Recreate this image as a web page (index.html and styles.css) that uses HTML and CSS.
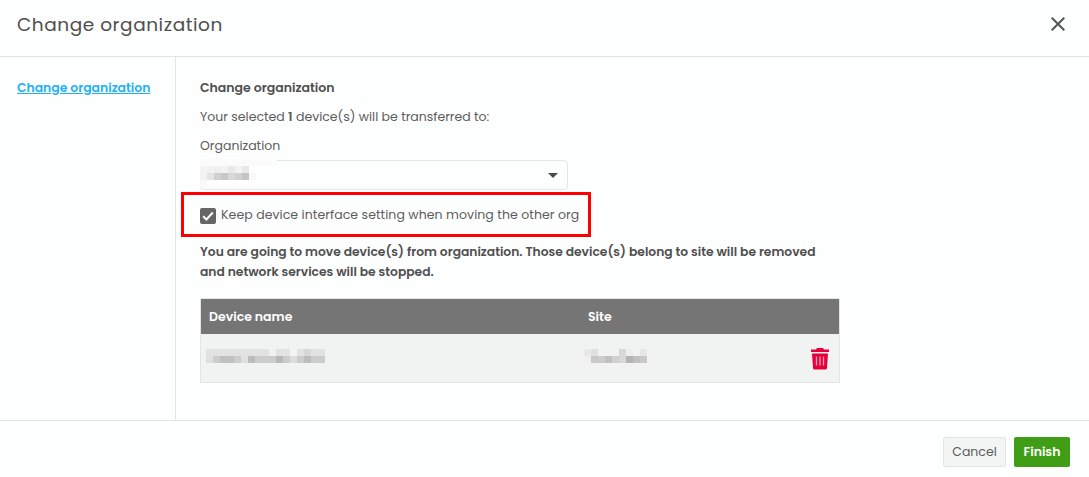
FILE: index.html
```html
<!DOCTYPE html>
<html lang="en">
<head>
  <meta charset="UTF-8" />
  <title>Change organization</title>
  <link rel="stylesheet" href="styles.css">
</head>
<body>
  <div class="modal">
    <header class="modal-header">
      <h1>Change organization</h1>
      <button class="close" aria-label="Close">
        <svg width="14" height="14" viewBox="0 0 14 14"><path d="M.7.7l12.600 12.600M13.300.7L.7 13.300" stroke="#555" stroke-width="2" fill="none"/></svg>
      </button>
    </header>

    <div class="modal-body">
      <nav class="side">
        <a href="#">Change organization</a>
      </nav>
      <main class="content">
        <h2>Change organization</h2>
        <p class="intro">Your selected <b>1</b> device(s) will be transferred to:</p>
        <label class="field-label">Organization</label>
        <div class="select">
          <svg class="blur org-blur" width="77" height="28" viewBox="0 0 77 28" shape-rendering="crispEdges">
            <rect width="77" height="7" fill="#fbfbfb"/>
            <rect y="7" width="7" height="7" fill="#f4f4f4"/>
            <rect x="7" y="7" width="7" height="7" fill="#f2f2f2"/>
            <rect x="14" y="7" width="7" height="7" fill="#efefef"/>
            <rect x="21" y="7" width="7" height="7" fill="#f2f2f2"/>
            <rect x="28" y="7" width="7" height="7" fill="#e8e8e8"/>
            <rect x="35" y="7" width="7" height="7" fill="#f2f2f2"/>
            <rect x="42" y="7" width="7" height="7" fill="#e8e8e8"/>
            <rect y="14" width="7" height="7" fill="#f2f2f2"/>
            <rect x="7" y="14" width="7" height="7" fill="#e4e4e4"/>
            <rect x="14" y="14" width="7" height="7" fill="#d0d0d0"/>
            <rect x="21" y="14" width="7" height="7" fill="#c8c8c8"/>
            <rect x="28" y="14" width="7" height="7" fill="#d8d8d8"/>
            <rect x="35" y="14" width="7" height="7" fill="#d0d0d0"/>
            <rect x="42" y="14" width="7" height="7" fill="#c4c4c4"/>
            <rect x="49" y="14" width="7" height="7" fill="#f8f8f8"/>
            <rect y="21" width="7" height="7" fill="#f8f8f8"/>
          </svg>
          <span class="caret"></span>
        </div>

        <div class="keep-box">
          <span class="check">
            <svg width="16" height="16" viewBox="0 0 16 16"><path d="M3.200 8.300l3.200 3.200 6.400-7" stroke="#fff" stroke-width="2" fill="none"/></svg>
          </span>
          <span>Keep device interface setting when moving the other org</span>
        </div>

        <p class="warning">You are going to move device(s) from organization. Those device(s) belong to site will be removed and network services will be stopped.</p>

        <div class="device-table">
          <div class="row head">
            <div class="col-name">Device name</div>
            <div class="col-site">Site</div>
          </div>
          <div class="row">
            <div class="col-name">
              <svg class="blur name-blur" width="119" height="14" viewBox="0 0 119 14" shape-rendering="crispEdges">
                <rect width="119" height="7" fill="#e2e2e2"/>
                <rect x="63" width="7" height="7" fill="#f0f0f0"/>
                <rect x="84" width="7" height="7" fill="#f4f4f4"/>
                <rect x="98" width="7" height="7" fill="#d8d8d8"/>
                <rect y="7" width="119" height="7" fill="#cccccc"/>
                <rect y="7" width="7" height="7" fill="#dfdfdf"/>
                <rect x="14" y="7" width="14" height="7" fill="#c0c0c0"/>
                <rect x="35" y="7" width="7" height="7" fill="#e0e0e0"/>
                <rect x="42" y="7" width="7" height="7" fill="#bcbcbc"/>
                <rect x="70" y="7" width="7" height="7" fill="#b8b8b8"/>
                <rect x="84" y="7" width="7" height="7" fill="#dcdcdc"/>
                <rect x="98" y="7" width="7" height="7" fill="#bcbcbc"/>
              </svg>
            </div>
            <div class="col-site">
              <svg class="blur site-blur" width="63" height="14" viewBox="0 0 63 14" shape-rendering="crispEdges">
                <rect width="7" height="7" fill="#e8e8e8"/>
                <rect x="7" width="7" height="7" fill="#e0e0e0"/>
                <rect x="35" width="7" height="7" fill="#d8d8d8"/>
                <rect x="42" width="7" height="7" fill="#eeeeee"/>
                <rect x="56" width="7" height="7" fill="#e6e6e6"/>
                <rect y="7" width="7" height="7" fill="#f0f0f0"/>
                <rect x="7" y="7" width="7" height="7" fill="#c8c8c8"/>
                <rect x="14" y="7" width="7" height="7" fill="#cccccc"/>
                <rect x="21" y="7" width="7" height="7" fill="#c0c0c0"/>
                <rect x="28" y="7" width="7" height="7" fill="#d0d0d0"/>
                <rect x="35" y="7" width="7" height="7" fill="#d8d8d8"/>
                <rect x="42" y="7" width="7" height="7" fill="#b4b4b4"/>
                <rect x="49" y="7" width="7" height="7" fill="#c0c0c0"/>
                <rect x="56" y="7" width="7" height="7" fill="#c8c8c8"/>
              </svg>
            </div>
            <button class="trash" aria-label="Delete">
              <svg width="20" height="23" viewBox="0 0 20 23"><path fill="#e4003a" d="M7 1h6l1 1.500h5v2.500h-18v-2.500h5zM2 6.500h16l-1 14.500a1.500 1.500 0 0 1-1.500 1.500h-11a1.500 1.500 0 0 1-1.500-1.500z"/><path d="M6.500 9.500v9M10 9.500v9M13.500 9.500v9" stroke="#f4a0b4" stroke-width="1.300"/></svg>
            </button>
          </div>
        </div>
      </main>
    </div>

    <footer class="modal-footer">
      <button class="btn cancel">Cancel</button>
      <button class="btn finish">Finish</button>
    </footer>
  </div>
</body>
</html>
```

FILE: styles.css
```css
* {
  box-sizing: border-box;
}

body {
  margin: 0;
  font-family: Poppins, Inter, "Open Sans", sans-serif;
  font-size: 12.5px;
  color: #5c5c5c;
  background-color: #fdfefe;
}

.modal {
  width: 1089px;
  height: 477px;
  display: flex;
  flex-direction: column;
}

.modal-header {
  height: 57px;
  padding: 0 24px 8px 17px;
  display: flex;
  align-items: center;
  justify-content: space-between;
  border-bottom: 1px solid #e3e5e5;
}

h1 {
  margin: 0;
  font-size: 18.5px;
  font-weight: 400;
  letter-spacing: 0.55px;
  color: #4f4f4f;
}

.close {
  padding: 0;
  border: none;
  background: none;
  display: flex;
}

.modal-body {
  flex: 1;
  display: flex;
}

.side {
  width: 176px;
  padding: 22px 0 0 17px;
  border-right: 1px solid #e3e5e5;
}

.side a {
  color: #1fb1f5;
  font-size: 12.4px;
  font-weight: 600;
  line-height: 16px;
}

.content {
  padding: 23px 0 0 24px;
}

h2 {
  margin: 0 0 13px;
  font-size: 12.5px;
  line-height: 16px;
  font-weight: 600;
  color: #4f4f4f;
}

.intro {
  margin: 0 0 13px;
  line-height: 16px;
}

.intro b {
  font-weight: 600;
}

.field-label {
  display: block;
  line-height: 16px;
  margin-bottom: 6px;
}

.select {
  width: 368px;
  height: 30px;
  border: 1px solid #e6e6e6;
  border-radius: 4px;
  display: flex;
  align-items: center;
  justify-content: space-between;
  padding-right: 9px;
}

.blur {
  display: block;
}

.org-blur {
  align-self: flex-start;
  margin: -2px 0 0 -1px;
}

.caret {
  width: 0;
  height: 0;
  border-left: 5px solid transparent;
  border-right: 5px solid transparent;
  border-top: 5px solid #4a4a4a;
}

.keep-box {
  width: 410px;
  height: 45px;
  margin: 2px 0 0 -19px;
  padding-left: 16px;
  border: 3px solid #ff0000;
  display: flex;
  align-items: center;
  gap: 5px;
  white-space: nowrap;
  letter-spacing: 0.07px;
}

.check {
  width: 16px;
  height: 16px;
  margin-top: 2px;
  background-color: #666;
  border-radius: 2px;
  display: flex;
}

.warning {
  width: 640px;
  margin: 5px 0 16px;
  font-size: 12.3px;
  font-weight: 600;
  line-height: 20px;
  color: #4f4f4f;
}

.device-table {
  width: 640px;
  border: 1px solid #e3e5e5;
}

.row {
  display: flex;
  align-items: center;
  height: 48px;
  background-color: #f1f2f2;
  padding-left: 8px;
}

.row.head {
  height: 35px;
  background-color: #757575;
  color: #fff;
  font-weight: 600;
}

.col-name {
  width: 379px;
  display: flex;
}

.name-blur {
  margin: -4px 0 0 -3px;
}

.col-site {
  flex: 1;
  display: flex;
}

.site-blur {
  margin: -4px 0 0 -4px;
}

.trash {
  padding: 0;
  margin-right: 9px;
  border: none;
  background: none;
  display: flex;
}

.modal-footer {
  height: 57px;
  padding: 16px 19px 0 0;
  border-top: 1px solid #e3e5e5;
  display: flex;
  align-items: flex-start;
  justify-content: flex-end;
  gap: 8px;
}

.btn {
  height: 30px;
  border-radius: 2px;
  font-family: inherit;
  font-size: 12.5px;
}

.cancel {
  width: 63px;
  background-color: #f3f4f4;
  border: 1px solid #e3e5e5;
  color: #5c5c5c;
}

.finish {
  width: 56px;
  background-color: #3f9e16;
  border: none;
  color: #fff;
  font-weight: 600;
}
```
